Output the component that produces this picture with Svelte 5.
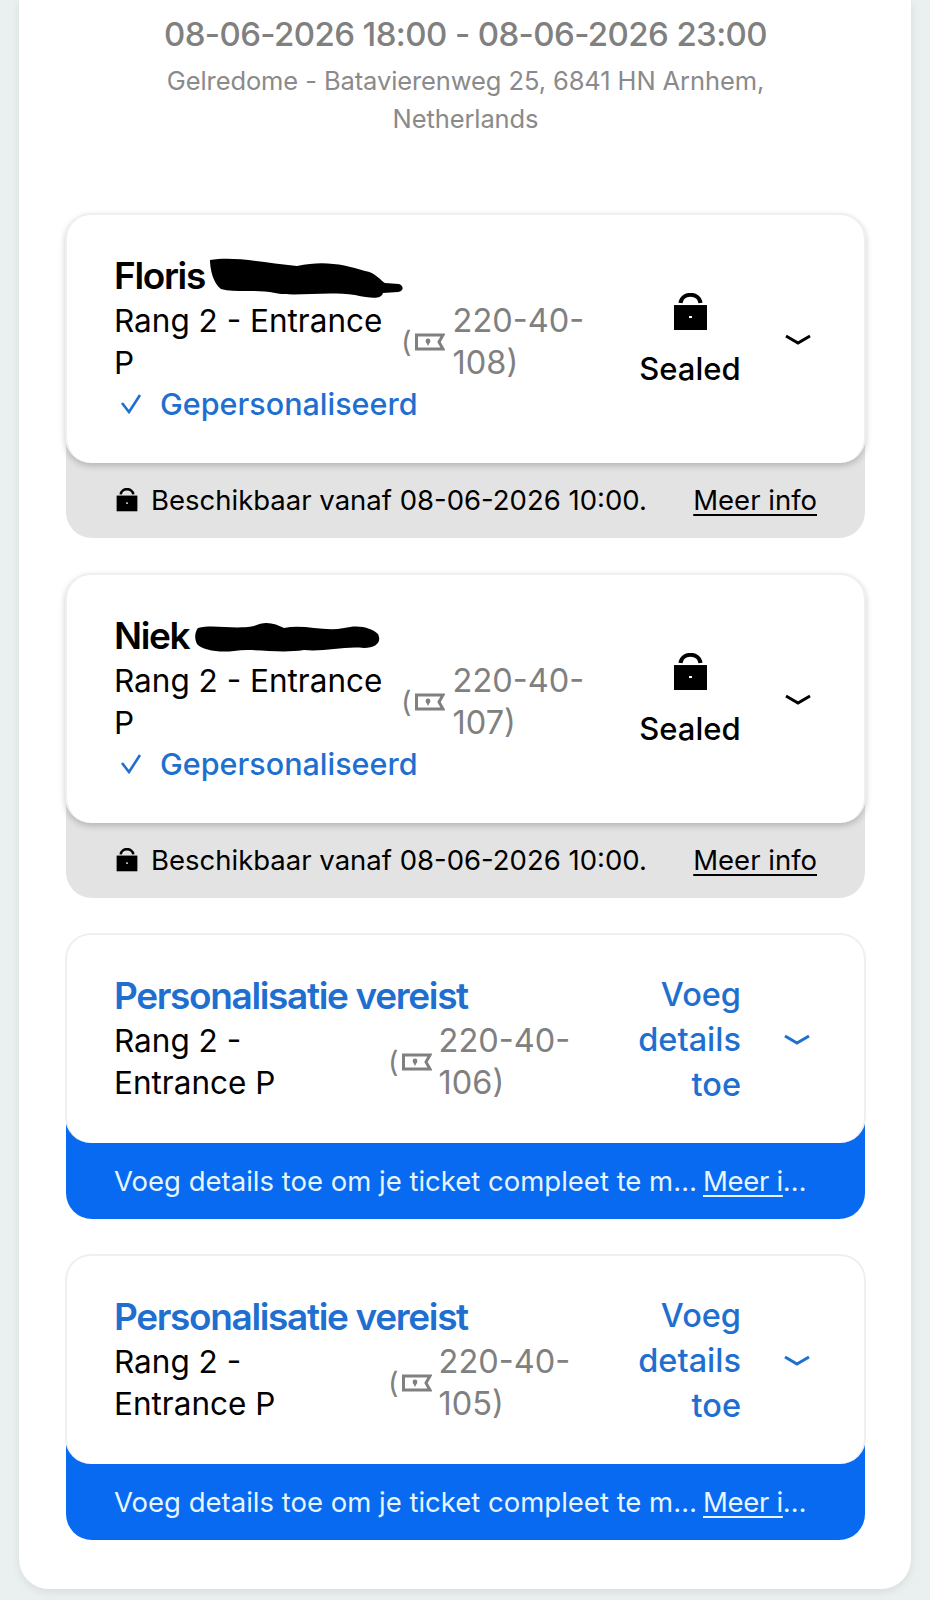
<script>
	const sealed = [
		{ name: 'Floris', no: '108', blob: 'M0 3 C25 -1 55 6 87 9 C115 3 135 8 155 14 C165 15 171 24 175 26 L189 27 C194 29 194 34 188 35 L173 36 C171 42 163 42 145 38 C115 34 85 40 65 36 C45 32 25 36 11 32 C3 26 0 12 0 3 Z', blobW: 193, blobH: 42 },
		{ name: 'Niek', no: '107', blob: 'M4 8 C20 4 40 10 60 6 C72 0 82 4 90 8 C110 4 130 12 150 8 C165 4 178 8 184 14 C188 22 182 28 170 28 C150 26 130 32 110 30 C85 34 60 28 40 31 C25 33 8 30 3 24 C0 18 1 12 4 8 Z', blobW: 188, blobH: 36 }
	];
	const required = ['106', '105'];
</script>

{#snippet lockIcon(size)}
	<svg class="lock" width={size} height={size * 1.06} viewBox="0 0 35 37">
		<path d="M7.5 10 C9 -1 26 -1 27.5 10" fill="none" stroke="#000" stroke-width="4" />
		<rect x="1" y="12" width="33" height="25" fill="#000" />
		<rect x="16" y="23" width="3" height="2" fill="#fff" />
	</svg>
{/snippet}

{#snippet seatLine(no)}
	<div class="line">
		<div class="place">Rang 2 - Entrance P</div>
		<div class="ticket">
			<span class="paren">(</span>
			<svg class="ticket-icon" width="30" height="18" viewBox="0 0 30 18">
				<path d="M1.5 2 H28 L24 9 L28 16 H1.5 Z" fill="none" stroke="#808080" stroke-width="3" />
				<circle cx="13" cy="8" r="2.4" fill="#808080" />
				<path d="M11 9 L13 13 L15 9 Z" fill="#808080" />
			</svg>
			<span class="number">220-40-<br />{no})</span>
		</div>
	</div>
{/snippet}

{#snippet chevron()}
	<svg class="chevron" width="28" height="12" viewBox="0 0 28 12">
		<path d="M2 2 L14 9 L26 2" fill="none" stroke="currentColor" stroke-width="3" />
	</svg>
{/snippet}

<div class="page">
	<main class="panel">
		<header class="event">
			<h1>08-06-2026 18:00 - 08-06-2026 23:00</h1>
			<p>Gelredome - Batavierenweg 25, 6841 HN Arnhem,<br />Netherlands</p>
		</header>

		<div class="cards">
			{#each sealed as t}
				<section class="card sealed">
					<div class="top">
						<div class="main">
							<div class="title">
								{t.name}
								<svg class="blob" width={t.blobW} height={t.blobH} viewBox="0 0 {t.blobW} {t.blobH}">
									<path d={t.blob} fill="#000" />
								</svg>
							</div>
							{@render seatLine(t.no)}
							<div class="personal">
								<svg width="22" height="20" viewBox="0 0 22 20">
									<path d="M2 9 L9 18 L20 1" fill="none" stroke="#1f6fd0" stroke-width="2.6" />
								</svg>
								Gepersonaliseerd
							</div>
						</div>
						<div class="status">
							{@render lockIcon(35)}
							<span>Sealed</span>
						</div>
						{@render chevron()}
					</div>
					<div class="foot grey">
						<span class="msg">
							{@render lockIcon(22)}
							Beschikbaar vanaf 08-06-2026 10:00.
						</span>
						<span class="more">Meer info</span>
					</div>
				</section>
			{/each}

			{#each required as no}
				<section class="card required">
					<div class="top">
						<div class="main">
							<div class="title blue">Personalisatie vereist</div>
							{@render seatLine(no)}
						</div>
						<div class="add">Voeg details toe</div>
						{@render chevron()}
					</div>
					<div class="foot blue-foot">
						<span class="msg cut">Voeg details toe om je ticket compleet te maken</span>
						<span class="more cut link-cut">Meer info</span>
					</div>
				</section>
			{/each}
		</div>
	</main>
</div>

<style>
	:global(body) {
		margin: 0;
		background: #eaf0f0;
		font-family: Inter, "Liberation Sans", sans-serif;
	}

	.page {
		height: 1600px;
		padding: 0 19px;
		box-sizing: border-box;
		overflow: hidden;
	}

	.panel {
		height: 1589px;
		background: #fff;
		border-radius: 0 0 30px 30px;
		box-shadow: 0 3px 10px rgba(0, 0, 0, 0.08);
		padding: 0 46px 0 47px;
		box-sizing: border-box;
	}

	.event {
		height: 213px;
		padding-top: 13px;
		box-sizing: border-box;
		text-align: center;
		color: #8a8a8a;
	}

	.event h1 {
		margin: 0;
		font-size: 33px;
		line-height: 42px;
		font-weight: 500;
		color: #808080;
		letter-spacing: -0.6px;
	}

	.event p {
		margin: 7px 0 0;
		font-size: 25.5px;
		line-height: 38px;
		letter-spacing: -0.1px;
	}

	.cards {
		display: flex;
		flex-direction: column;
		gap: 35px;
	}

	.card {
		display: flex;
		flex-direction: column;
	}

	.top {
		position: relative;
		z-index: 1;
		display: flex;
		align-items: center;
		background: #fff;
		border: 2px solid #efefef;
		border-bottom: 0;
		border-radius: 26px;
		padding: 40px 0 38px 47px;
		box-shadow: 0 3px 6px rgba(0, 0, 0, 0.2);
		margin: 0 -1px;
	}

	.required .top {
		box-shadow: none;
		padding: 37px 0 36px 47px;
	}

	.main {
		flex: none;
		display: flex;
		flex-direction: column;
	}

	.sealed .main {
		width: 515px;
	}

	.required .main {
		width: 505px;
	}

	.title {
		display: flex;
		align-items: center;
		gap: 5px;
		font-size: 37px;
		line-height: 42px;
		font-weight: 600;
		letter-spacing: -1.35px;
		color: #000;
		height: 42px;
		white-space: nowrap;
	}

	.title.blue {
		color: #1f6fd0;
	}

	.blob {
		flex: none;
		margin-top: 4px;
	}

	.line {
		display: flex;
		align-items: center;
		margin-top: 3px;
	}

	.place {
		flex: none;
		box-sizing: border-box;
		font-size: 31.5px;
		line-height: 42px;
		color: #000;
	}

	.sealed .place {
		width: 287px;
	}

	.required .place {
		width: 274px;
		padding-right: 74px;
	}

	.personal {
		display: flex;
		align-items: center;
		gap: 18px;
		margin-top: -1px;
		padding-left: 6px;
		font-size: 30.5px;
		line-height: 42px;
		font-weight: 500;
		color: #1f6fd0;
		white-space: nowrap;
	}

	.personal svg {
		flex: none;
	}

	.ticket {
		display: flex;
		align-items: center;
		color: #808080;
	}

	.paren {
		font-size: 29px;
		line-height: 42px;
	}

	.ticket-icon {
		margin: 0 7px 0 3px;
		flex: none;
	}

	.sealed .ticket-icon {
		margin-right: 8px;
	}

	.number {
		font-size: 32.5px;
		line-height: 42px;
	}

	.status {
		flex: none;
		width: 122px;
		display: flex;
		flex-direction: column;
		align-items: center;
		gap: 21px;
		font-size: 31px;
		line-height: 36px;
		font-weight: 500;
		color: #000;
	}

	.add {
		flex: none;
		width: 122px;
		text-align: right;
		font-size: 32.5px;
		line-height: 45px;
		font-weight: 500;
		color: #1f6fd0;
	}

	.chevron {
		flex: none;
		margin-left: 33px;
		color: #000;
	}

	.required .chevron {
		margin-left: 42px;
		color: #1f6fd0;
	}

	.foot {
		display: flex;
		align-items: center;
		justify-content: space-between;
		margin-top: -30px;
		height: 105px;
		padding: 29px 48px 0 50px;
		box-sizing: border-box;
		border-radius: 0 0 26px 26px;
		font-size: 27.5px;
	}

	.grey {
		background: #e3e3e3;
		color: #000;
	}

	.blue-foot {
		background: #076af0;
		color: #e6f5ff;
		justify-content: flex-start;
		gap: 5px;
		height: 106px;
		padding-left: 48px;
	}

	.msg {
		display: flex;
		align-items: center;
		gap: 13px;
		white-space: nowrap;
	}

	.more {
		text-decoration: underline;
		text-underline-offset: 4px;
		white-space: nowrap;
	}

	.cut {
		display: block;
		overflow: hidden;
		text-overflow: ellipsis;
		flex: none;
		width: 584px;
	}

	.link-cut {
		width: 105px;
		letter-spacing: -0.3px;
	}
</style>
